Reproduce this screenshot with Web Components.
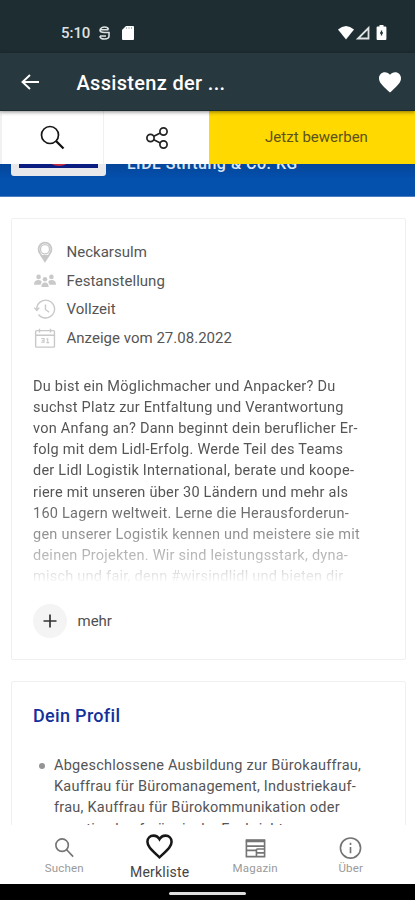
<!DOCTYPE html>
<html lang="de"><head><meta charset="utf-8"><title>Stellenanzeige</title>
<style>html,body{margin:0;height:100%;overflow:hidden;background:#fff}body{font-family:Roboto,"Liberation Sans",sans-serif}</style></head>
<body><job-app></job-app>
<script>
const define=(name,html,setup)=>customElements.define(name,class extends HTMLElement{
  constructor(){super();const t=document.createElement('template');t.innerHTML=html;
    this.attachShadow({mode:'open'}).append(t.content.cloneNode(true));}
  connectedCallback(){if(setup)setup(this,this.shadowRoot);}
});

define('status-bar',`<style>
:host{display:flex;box-sizing:border-box;height:53px;background:#1e2d31;color:#dfe2e3;padding:0 28px 0 61px;align-items:center;font-size:15px;font-weight:500}
svg{display:block}.time{padding-top:13px;width:37px;letter-spacing:-.05px;white-space:nowrap}.l,.r{display:flex;padding-top:12px}.l{gap:11px}.r{margin-left:auto;gap:2px}
</style><span class="time">5:10</span>
<div class="l"><svg width="13" height="16" viewBox="0 0 13 16"><path d="M10.500 4.500Q10 2 6.500 2T2 5q0 2.500 4.500 2.500H11v3.500q0 3-4.500 3T2 11M2.500 4.800h8M2 11h6" fill="none" stroke="#dce0e0" stroke-width="1.600"/></svg>
<svg width="12" height="16" viewBox="0 0 12 16"><path d="M4 1h7q1 0 1 1v12q0 1-1 1H1q-1 0-1-1V5z" fill="#fff"/><path d="M4.500 2v2M7 2v2M9.500 2v2" stroke="#b3b8b9"/></svg></div>
<div class="r"><svg width="16" height="16" viewBox="0 0 16 16"><path d="M0 4.500Q8-2.500 16 4.500L8 14.500z" fill="#fff"/></svg>
<svg width="15" height="16" viewBox="0 0 15 16"><path d="M2 13.500h10.500V3z" fill="none" stroke="#dfe3e4" stroke-width="1.800"/></svg>
<svg style="margin-left:3px" width="11" height="16" viewBox="0 0 11 16"><path d="M3.500 0h4v1.500h2q.9 0 .9.900v11.700q0 .9-.9.900h-8q-.9 0-.9-.9V2.400q0-.9.900-.9h2z" fill="#fff"/><path d="M5.500 5.500v5M4 8h3" stroke="#27383e" stroke-width="1.300"/></svg></div>`);

define('title-bar',`<style>
:host{display:flex;box-sizing:border-box;height:58px;background:#27383e;color:#fff;padding:0 13px 0 20px;align-items:center;box-shadow:0 1px 4px #0007;position:relative;z-index:3;font-size:20px;font-weight:500;border-bottom:1px solid #1b2c31}
svg{display:block}.h{margin-left:auto}
::slotted(span){margin:2px 0 0 36.500px;letter-spacing:.32px;white-space:nowrap}
</style><svg width="20" height="18" viewBox="0 0 20 18"><path d="M10 2L2.500 9l7.500 7M2.500 9H19" fill="none" stroke="#fff" stroke-width="1.900"/></svg><slot></slot>
<svg class="h" width="24" height="22" viewBox="0 0 24 22"><path d="M12 21.500L10.200 19.900C3.800 14 1 11.200 1 7.300 1 4 3.500 1.300 6.900 1.300c2 0 3.900 1 5.100 2.500C13.200 2.300 15.100 1.300 17.100 1.300 20.500 1.300 23 4 23 7.300c0 3.900-2.800 6.700-9.200 12.600z" fill="#fff"/></svg>`);

define('action-bar',`<style>
:host{display:grid;grid-template-columns:104px 105px 1fr;height:53px;position:relative;z-index:2;background:#fff}
div{display:flex;box-sizing:border-box;align-items:center;justify-content:center;color:#5c531c;font-size:15px}
.s{border-right:1px solid #f0f0f0;box-shadow:inset 2px 0 #f1f1f1}.s svg{margin-left:1px}.y{background:#ffd900;padding-left:9px;padding-bottom:1px;letter-spacing:.02px}
</style><div class="s"><svg width="25" height="25" viewBox="0 0 25 25"><circle cx="10" cy="10" r="8.500" fill="none" stroke="#151515" stroke-width="1.700"/><path d="M16 16l7.500 7.500" stroke="#111" stroke-width="2.300"/></svg></div>
<div><svg width="24" height="24" viewBox="0 0 24 24"><g fill="none" stroke="#222" stroke-width="1.700"><circle cx="5.500" cy="12" r="3.600"/><circle cx="18.500" cy="5.500" r="3.600"/><circle cx="18.500" cy="18.500" r="3.600"/><path d="M8.800 10.300l6.500-3.200M8.800 13.700l6.500 3.200"/></g></svg></div>
<div class="y"><slot></slot></div>`);

define('company-strip',`<style>
:host{display:flex;box-sizing:border-box;height:33px;background:linear-gradient(#05469a,#0450ad 45%);overflow:hidden;padding-left:11px;border-bottom:1px solid #4b7cc4}
.logo{box-sizing:border-box;width:95px;height:45px;margin-top:-33px;background:#0c1d82;border:8px solid #e9e9ec;border-radius:3px;overflow:hidden;display:flex;justify-content:center;align-items:end}
.logo i{width:30px;height:31px;border-radius:50%;background:#c52c45;margin-bottom:2px}
::slotted(span){display:block;margin:-10px 0 0 21px;color:#dbe6f8;font-size:16px;line-height:20px;font-weight:500;letter-spacing:.48px;white-space:nowrap}
</style><div class="logo"><i></i></div><slot></slot>`);

define('content-card',`<style>:host{display:block;box-sizing:border-box;border:1px solid #f0f0f0;border-radius:2px;background:#fff;margin:0 9px 0 11px;padding:0 21px}</style><slot></slot>`);

const icons={
pin:'<path stroke-width="2" d="M12 22L6.500 13.500C2.800 7.500 7 1.800 12 1.800s9.200 5.700 5.500 11.700z"/><circle cx="12" cy="9" r="5"/><path fill="#c6c6c6" d="M9 16h6l-3 5z"/>',
people:'<g fill="#c9c9c9" stroke="none"><circle cx="5" cy="7.500" r="2.500"/><circle cx="19" cy="7.500" r="2.500"/><circle cx="12" cy="10" r="2.500"/><path d="M0 16q0-5 5-5 3 0 3.500 2L7 16zM24 16q0-5-5-5-3 0-3.500 2l1.500 3zM8 18.500q0-5 4-5t4 5z"/></g>',
clock:'<path d="M3 12a9.700 9.700 0 1 1 2 6M.3 10.500l2.700 3 2.800-3M12.500 7v5.500l4 3"/>',
cal:'<rect x="1.800" y="4" width="20.500" height="18" rx="1"/><path d="M2 9h20M6 2v4M18 2v4"/><path d="M8 12.500h3v4H8M8.500 14.500H11M13.500 13h1.500v4M13.500 17h3" stroke-width="1.200"/>'};
define('fact-row',`<style>:host{display:flex;align-items:center;height:28.700px;gap:10.500px;color:#555;font-size:15px;letter-spacing:.02px}svg{margin-left:1px;width:22px;height:22px;fill:none;stroke:#c8c8c8;stroke-width:1.500}</style><svg viewBox="0 0 24 24"></svg><slot></slot>`,(h,r)=>r.querySelector('svg').innerHTML=icons[h.getAttribute('icon')]);

define('text-lines',`<style>:host{display:block;color:#555;font-size:14.500px;line-height:21.170px;letter-spacing:.245px;white-space:pre-line}:host([fade]){height:212px;overflow:hidden;-webkit-mask-image:linear-gradient(#000 57%,#0009 77%,#0004 91%,#0000 98%)}</style><slot></slot>`);

define('more-button',`<style>:host{display:flex;align-items:center;gap:10.500px;font-size:15px;color:#505050}i{width:34px;height:34px;border-radius:50%;background:#f4f4f4;display:flex;align-items:center;justify-content:center}</style><i><svg width="14" height="14" viewBox="0 0 14 14"><path d="M7 .5v13M.5 7h13" stroke="#333" stroke-width="1.700"/></svg></i><slot></slot>`);

define('bullet-item',`<style>:host{display:grid;grid-template-columns:21px 1fr}i{width:6px;height:6px;border-radius:50%;background:#949494;margin:8px 0 0 6px}</style><i></i><slot></slot>`);

const nav={
search:'<circle cx="9.500" cy="8.500" r="6.500"/><path d="M14 13l7 7.500"/>',
heart:'<path stroke-width="2.100" d="M12 21L10.500 19.600C4.500 14 2 11.500 2 8c0-3 2.200-5 5-5 2 0 4 1.200 5 3 1-1.800 3-3 5-3 2.800 0 5 2 5 5 0 3.500-2.500 6-8.500 11.600z"/>',
magazine:'<path d="M2.500 3.500h19v17h-19zM2.500 9.500h19M2.500 14h10.500M13 12.500v8M13 12.500h8.500M13 16.500h8.500"/><path stroke-width="3" d="M2 4h20"/>',
info:'<circle cx="12" cy="11.500" r="10.500"/><path d="M12 10.500v6.500M12 6v2.300"/>'};
define('nav-item',`<style>:host{display:flex;flex-direction:column;align-items:center;color:#9a9a9a;font-size:11.500px;letter-spacing:.2px;padding-top:12px;gap:1px;line-height:15px}
svg{width:23px;height:23px;fill:none;stroke:#747474;stroke-width:1.700}:host([active]){color:#444;font-size:14px;padding-top:7px;gap:2px;line-height:18px}:host([active]) svg{width:29px;height:29px;stroke:#171717}</style><svg viewBox="0 0 24 24"></svg><slot></slot>`,(h,r)=>r.querySelector('svg').innerHTML=nav[h.getAttribute('icon')]);

define('bottom-nav',`<style>:host{display:grid;grid-template-columns:repeat(4,95.500px);justify-content:center;height:59px;background:#fff}</style><slot></slot>`);
define('gesture-bar',`<style>:host{display:flex;box-sizing:border-box;padding-top:2px;height:16px;background:#000;justify-content:center;align-items:center}i{width:77px;height:3px;border-radius:2px;background:#ddd}</style><i></i>`);

define('job-app',`<style>
:host{display:flex;flex-direction:column;width:415px;height:900px;background:#fff;overflow:hidden}
main{flex:1;min-height:0;overflow:hidden}.facts{padding-top:18.500px}.intro{margin-top:23.500px}.more{margin-top:16px}.a{margin-top:21px;height:442px}.b{margin-top:21px;height:220px}
h2{margin:23px 0 28px;font-size:18px;line-height:22px;font-weight:500;letter-spacing:.32px;color:#12309b}
</style>
<status-bar></status-bar><title-bar><span>Assistenz der ...</span></title-bar><action-bar>Jetzt bewerben</action-bar>
<main><company-strip><span>LIDL Stiftung &amp; Co. KG</span></company-strip>
<content-card class="a"><div class="facts"><fact-row icon="pin">Neckarsulm</fact-row><fact-row icon="people">Festanstellung</fact-row><fact-row icon="clock">Vollzeit</fact-row><fact-row icon="cal">Anzeige vom 27.08.2022</fact-row></div>
<text-lines class="intro" fade>Du bist ein Möglichmacher und Anpacker? Du
suchst Platz zur Entfaltung und Verantwortung
von Anfang an? Dann beginnt dein beruflicher Er-
folg mit dem Lidl-Erfolg. Werde Teil des Teams
der Lidl Logistik International, berate und koope-
riere mit unseren über 30 Ländern und mehr als
160 Lagern weltweit. Lerne die Herausforderun-
gen unserer Logistik kennen und meistere sie mit
deinen Projekten. Wir sind leistungsstark, dyna-
misch und fair, denn #wirsindlidl und bieten dir</text-lines>
<more-button class="more">mehr</more-button></content-card>
<content-card class="b"><h2>Dein Profil</h2><bullet-item><text-lines>Abgeschlossene Ausbildung zur Bürokauffrau,
Kauffrau für Büromanagement, Industriekauf-
frau, Kauffrau für Bürokommunikation oder
sonstige kaufmännische Fachrichtung</text-lines></bullet-item></content-card></main>
<bottom-nav><nav-item icon="search">Suchen</nav-item><nav-item icon="heart" active>Merkliste</nav-item><nav-item icon="magazine">Magazin</nav-item><nav-item icon="info">Über</nav-item></bottom-nav><gesture-bar></gesture-bar>`);
</script></body></html>
